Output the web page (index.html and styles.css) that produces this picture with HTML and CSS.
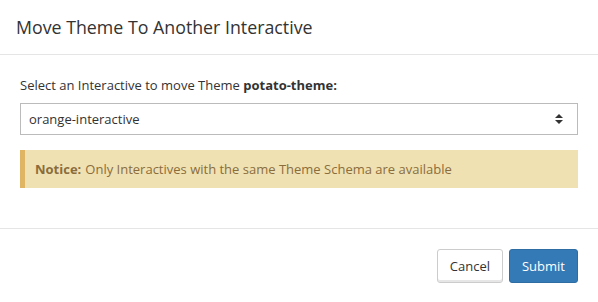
FILE: index.html
```html
<!DOCTYPE html>
<html>
<head>
	<title>Move Theme</title>
	<link rel="stylesheet" href="styles.css">
</head>
<body>
<div class="modal">
	<div class="modal-header">
		<h4 class="modal-title">Move Theme To Another Interactive</h4>
	</div>
	<div class="modal-body">
		<label class="field-label">Select an Interactive to move Theme <b>potato-theme:</b></label>
		<div class="select">
			<span>orange-interactive</span>
			<svg class="caret" width="8" height="12" viewBox="0 0 8 12"><path d="M0 5 L4 1 L8 5 Z M0 7 L4 11 L8 7 Z" fill="#333"/></svg>
		</div>
		<div class="alert"><b>Notice:</b> Only Interactives with the same Theme Schema are available</div>
	</div>
	<div class="modal-footer">
		<button class="btn btn-default">Cancel</button>
		<button class="btn btn-primary">Submit</button>
	</div>
</div>
</body>
</html>
```

FILE: styles.css
```css
body {
	margin: 0;
	font-family: "Open Sans", sans-serif;
	color: #333;
	background: #fff;
}
.modal {
	width: 598px;
	height: 302px;
	box-sizing: border-box;
}
.modal-header {
	height: 54px;
	padding: 0 16px;
	display: flex;
	align-items: center;
	border-bottom: 1px solid #e5e5e5;
}
.modal-title {
	margin: 0;
	font-size: 17.8px;
	font-weight: normal;
	color: #333;
}
.modal-body {
	padding: 20px 20px 20px 20px;
	height: 173px;
	box-sizing: border-box;
}
.field-label {
	display: block;
	font-size: 13px;
	line-height: 20px;
	margin: 0 0 8px;
}
.select {
	height: 32px;
	box-sizing: border-box;
	border: 1px solid #bbb;
	padding: 0 14px 0 8px;
	display: flex;
	align-items: center;
	justify-content: space-between;
	font-size: 13px;
}
.alert {
	margin-top: 15px;
	height: 38px;
	box-sizing: border-box;
	padding: 0 10px;
	display: flex;
	align-items: center;
	background: #f0e1b3;
	border-left: 5px solid #dfb463;
	color: #8a6d3b;
	font-size: 13px;
}
.alert b {
	margin-right: 4px;
}
.modal-footer {
	border-top: 1px solid #e5e5e5;
	padding: 20px 20px;
	display: flex;
	justify-content: flex-end;
	gap: 6px;
}
.btn {
	height: 34px;
	padding: 0 12px;
	font-family: "Open Sans", sans-serif;
	font-size: 13px;
	border-radius: 3px;
	border: 1px solid #ccc;
}
.btn-default {
	background: #fff;
	color: #333;
	box-shadow: inset 0 -2px 0 #e6e6e6;
}
.btn-primary {
	background: #337ab7;
	border-color: #2e6da4;
	color: #fff;
}
```
